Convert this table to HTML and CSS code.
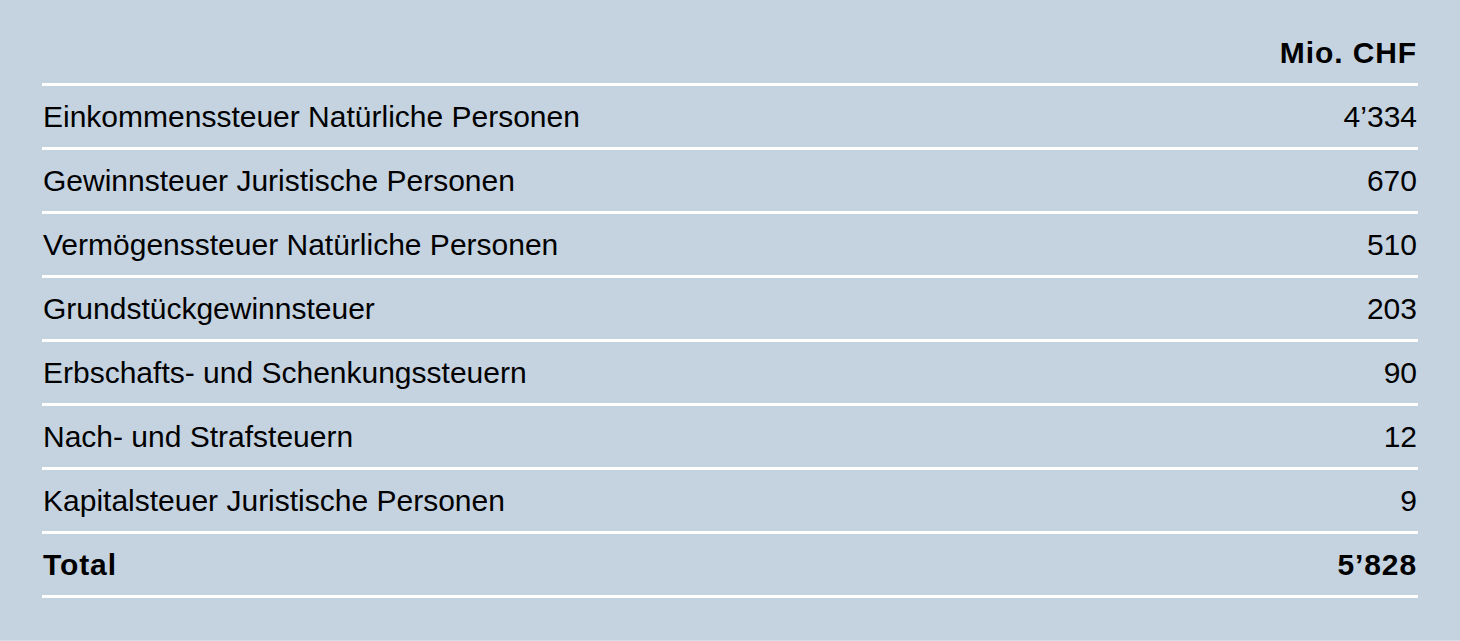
FILE: index.html
```html
<!DOCTYPE html>
<html lang="de">
<head>
<meta charset="utf-8">
<title>Steuererträge</title>
<link rel="stylesheet" href="styles.css">
</head>
<body>
<div class="panel">
  <table class="tax-table">
    <thead>
      <tr class="head-row">
        <th class="label"></th>
        <th class="value">Mio. CHF</th>
      </tr>
    </thead>
    <tbody>
      <tr><td class="label">Einkommenssteuer Natürliche Personen</td><td class="value">4’334</td></tr>
      <tr><td class="label">Gewinnsteuer Juristische Personen</td><td class="value">670</td></tr>
      <tr><td class="label">Vermögenssteuer Natürliche Personen</td><td class="value">510</td></tr>
      <tr><td class="label">Grundstückgewinnsteuer</td><td class="value">203</td></tr>
      <tr><td class="label">Erbschafts- und Schenkungssteuern</td><td class="value">90</td></tr>
      <tr><td class="label">Nach- und Strafsteuern</td><td class="value">12</td></tr>
      <tr><td class="label">Kapitalsteuer Juristische Personen</td><td class="value">9</td></tr>
      <tr class="total-row"><td class="label">Total</td><td class="value">5’828</td></tr>
    </tbody>
  </table>
</div>
</body>
</html>
```
FILE: styles.css
```css
html, body {
  margin: 0;
  padding: 0;
  background: #c5d3e0;
}
body {
  font-family: "Liberation Sans", Arial, sans-serif;
  color: #000;
  height: 640px;
  overflow: hidden;
  border-bottom: 1px solid #d3dee8;
}
.panel {
  padding: 0 42px;
}
.tax-table {
  width: 100%;
  border-collapse: collapse;
  font-size: 30px;
}
.tax-table th,
.tax-table td {
  padding: 2px 1px 0;
  border-bottom: 3px solid #ffffff;
  height: 59px;
  vertical-align: middle;
  line-height: 1;
}
.tax-table th {
  height: 84px;
  vertical-align: bottom;
  padding: 0 1px 15px;
  box-sizing: border-box;
  font-weight: bold;
  letter-spacing: 0.9px;
}
.label {
  text-align: left;
  font-weight: normal;
}
.value {
  text-align: right;
}
.total-row td {
  font-weight: bold;
  letter-spacing: 0.9px;
}
```
